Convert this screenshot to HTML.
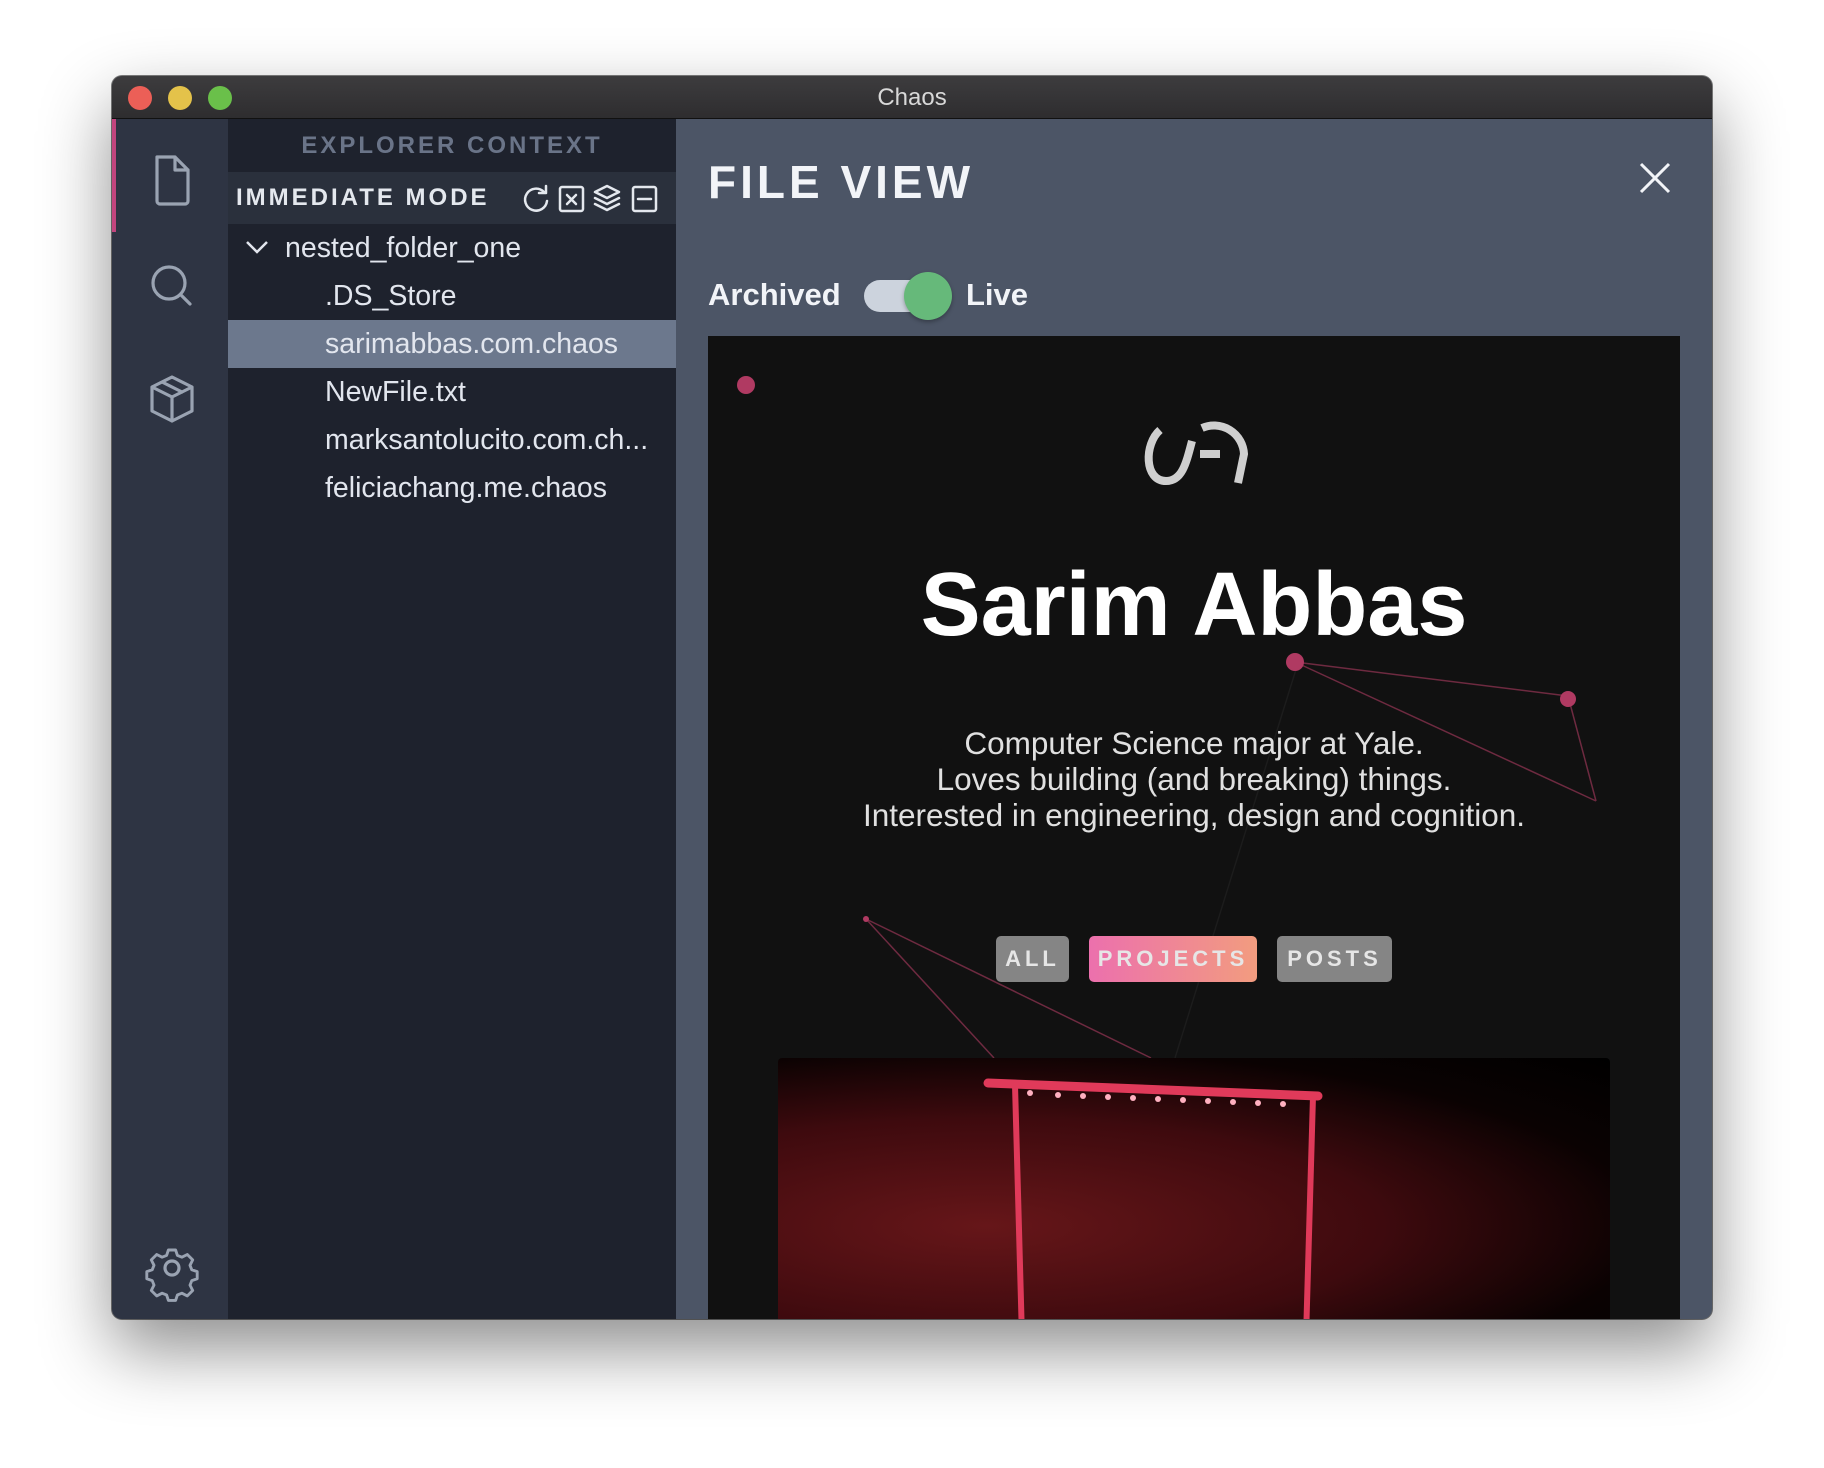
<!DOCTYPE html>
<html><head><meta charset="utf-8"><style>
*{margin:0;padding:0;box-sizing:border-box}
body{width:1824px;height:1468px;background:#fff;position:relative;overflow:hidden;font-family:"Liberation Sans",sans-serif}
.win{position:absolute;left:112px;top:76px;width:1600px;height:1243px;border-radius:10px;overflow:hidden;box-shadow:0 30px 70px rgba(0,0,0,.45),0 0 0 1px rgba(0,0,0,.5);background:#4c5566}
.title{position:absolute;left:0;top:0;width:1600px;height:43px;background:linear-gradient(#3d3c3e,#2e2d2f);border-bottom:1px solid #111;color:#d8d8d8;font-size:24px;text-align:center;line-height:43px}
.dot{position:absolute;top:10px;width:24px;height:24px;border-radius:50%}
.act{position:absolute;left:0;top:43px;width:116px;height:1200px;background:#2e3443}
.ind{position:absolute;left:0;top:0;width:4px;height:113px;background:#c2457e}
.side{position:absolute;left:116px;top:43px;width:448px;height:1200px;background:#1e222d}
.h1{height:53px;color:#6a7488;font-weight:bold;font-size:24px;letter-spacing:3px;text-align:center;line-height:53px}
.h2{height:52px;background:#2a303c;color:#e4e8ee;font-weight:bold;font-size:24px;letter-spacing:3px;line-height:52px;padding-left:8px;position:relative}
.row{height:48px;line-height:48px;color:#e2e6ee;font-size:28.5px;padding-left:97px;white-space:nowrap}
.sel{background:#6c788d}
.main{position:absolute;left:564px;top:43px;width:1036px;height:1200px}
.fv{position:absolute;left:32px;top:36px;color:#f2f4f8;font-weight:bold;font-size:46px;letter-spacing:4px}
.tg{position:absolute;top:158px;color:#f2f4f8;font-weight:bold;font-size:31px}
.prev{position:absolute;left:32px;top:217px;width:972px;height:990px;background:#111;overflow:hidden}
.btn{position:absolute;top:600px;height:46px;border-radius:5px;color:#e6e6e6;font-weight:bold;font-size:22px;letter-spacing:4px;line-height:46px;text-align:center;background:#858585}
</style></head><body>
<div class="win">
 <div class="title">Chaos
  <div class="dot" style="left:16px;background:#ec5f57"></div>
  <div class="dot" style="left:56px;background:#e4c24a"></div>
  <div class="dot" style="left:96px;background:#6ac04a"></div>
 </div>
 <div class="act"><div class="ind"></div>
  <svg width="116" height="1200" fill="none" stroke="#9aa3b2" stroke-width="3.2" stroke-linecap="round" stroke-linejoin="round">
   <path d="M45 38h18l13 13v31a3 3 0 0 1-3 3H48a3 3 0 0 1-3-3z M63 38v13h13"/>
   <circle cx="57" cy="164" r="16"/><path d="M69 176l9 9"/>
   <path d="M60 258l20 10v24l-20 10-20-10v-24z M40 268l20 10 20-10 M60 278v24 M50 263l20 10"/>
   <circle cx="60" cy="1149" r="7"/>
   <path transform="translate(60,1149) scale(0.9)" d="M-4-20h8l2 6 5 2 6-3 6 6-3 6 2 5 6 2v8l-6 2-2 5 3 6-6 6-6-3-5 2-2 6h-8l-2-6-5-2-6 3-6-6 3-6-2-5-6-2v-8l6-2 2-5-3-6 6-6 6 3 5-2z"/>
  </svg>
 </div>
 <div class="side">
  <div class="h1">EXPLORER CONTEXT</div>
  <div class="h2">IMMEDIATE MODE
   <svg style="position:absolute;left:294px;top:12px" width="150" height="30" fill="none" stroke="#e4e8ee" stroke-width="2.5" stroke-linecap="round" stroke-linejoin="round">
    <path d="M22 8a11 11 0 1 0 3 9 M24 2v7h-7"/>
    <rect x="38" y="3" width="23" height="24" rx="2"/><path d="M45 11l9 9M54 11l-9 9"/>
    <path d="M85 2l12 6-12 6-12-6z M73 14l12 6 12-6 M73 20l12 6 12-6"/>
    <rect x="111" y="3" width="23" height="24" rx="2"/><path d="M116 15h13"/>
   </svg>
  </div>
  <div class="row" style="padding-left:57px;position:relative"><span style="position:absolute;left:16px;top:0"><svg width="26" height="48"><path d="M3 18l10 10 10-10" fill="none" stroke="#e2e6ee" stroke-width="2.5"/></svg></span>nested_folder_one</div>
  <div class="row">.DS_Store</div>
  <div class="row sel">sarimabbas.com.chaos</div>
  <div class="row">NewFile.txt</div>
  <div class="row">marksantolucito.com.ch...</div>
  <div class="row">feliciachang.me.chaos</div>
 </div>
 <div class="main">
  <div class="fv">FILE VIEW</div>
  <svg style="position:absolute;left:962px;top:42px" width="34" height="34"><path d="M3 3l28 28M31 3L3 31" stroke="#f2f4f8" stroke-width="3"/></svg>
  <div class="tg" style="left:32px">Archived</div>
  <div style="position:absolute;left:188px;top:161px;width:84px;height:32px;border-radius:16px;background:#ccd3dd"></div>
  <div style="position:absolute;left:228px;top:153px;width:48px;height:48px;border-radius:50%;background:#66b97a;box-shadow:0 2px 4px rgba(0,0,0,.3)"></div>
  <div class="tg" style="left:290px">Live</div>
  <div class="prev">
   <svg style="position:absolute;left:0;top:0" width="972" height="990" fill="none">
    <path d="M590 327L467 722" stroke="#1c1c1c" stroke-width="1.5"/>
    <g stroke="#6e2a40" stroke-width="1.5"><path d="M587 326L860 360M587 326L888 465M860 360L888 465M158 583L286 722M158 583L443 722"/></g>
    <circle cx="38" cy="49" r="9" fill="#b03a62"/>
    <circle cx="587" cy="326" r="9" fill="#b03a62"/>
    <circle cx="860" cy="363" r="8" fill="#b03a62"/>
    <circle cx="158" cy="583" r="3" fill="#b03a62"/>
    <g stroke="#cfcfcf" stroke-width="8"><path d="M452 94C436 108 436 145 458 145C474 145 478 128 484 105M494 92A30 30 0 0 1 536 118L530 147M492 118h20"/></g>
   </svg>
   <div style="position:absolute;left:0;width:972px;top:218px;text-align:center;color:#fff;font-size:90px;font-weight:bold">Sarim Abbas</div>
   <div style="position:absolute;left:0;width:972px;top:389px;text-align:center;color:#e0e0e0;font-size:31.5px;line-height:36px">Computer Science major at Yale.<br>Loves building (and breaking) things.<br>Interested in engineering, design and cognition.</div>
   <div class="btn" style="left:288px;width:73px">ALL</div>
   <div class="btn" style="left:381px;width:168px;background:linear-gradient(90deg,#ec70ad,#f29c7f)">PROJECTS</div>
   <div class="btn" style="left:569px;width:115px">POSTS</div>
   <div style="position:absolute;left:70px;top:722px;width:832px;height:280px;border-radius:4px;background:radial-gradient(ellipse at 25% 60%,#661619,#3e0a0e 45%,#0a0202 75%,#000)">
    <svg width="832" height="280" fill="none" stroke="#e03a5a" stroke-linecap="round">
     <path d="M210 25L540 38" stroke-width="9"/>
     <path d="M237 27L244 280M535 38L528 280" stroke-width="6"/>
     <g fill="#ffb0c0" stroke="none"><circle cx="252" cy="35" r="3"/><circle cx="280" cy="37" r="3"/><circle cx="305" cy="38" r="3"/><circle cx="330" cy="39" r="3"/><circle cx="355" cy="40" r="3"/><circle cx="380" cy="41" r="3"/><circle cx="405" cy="42" r="3"/><circle cx="430" cy="43" r="3"/><circle cx="455" cy="44" r="3"/><circle cx="480" cy="45" r="3"/><circle cx="505" cy="46" r="3"/></g>
    </svg>
   </div>
  </div>
 </div>
</div>
</body></html>
